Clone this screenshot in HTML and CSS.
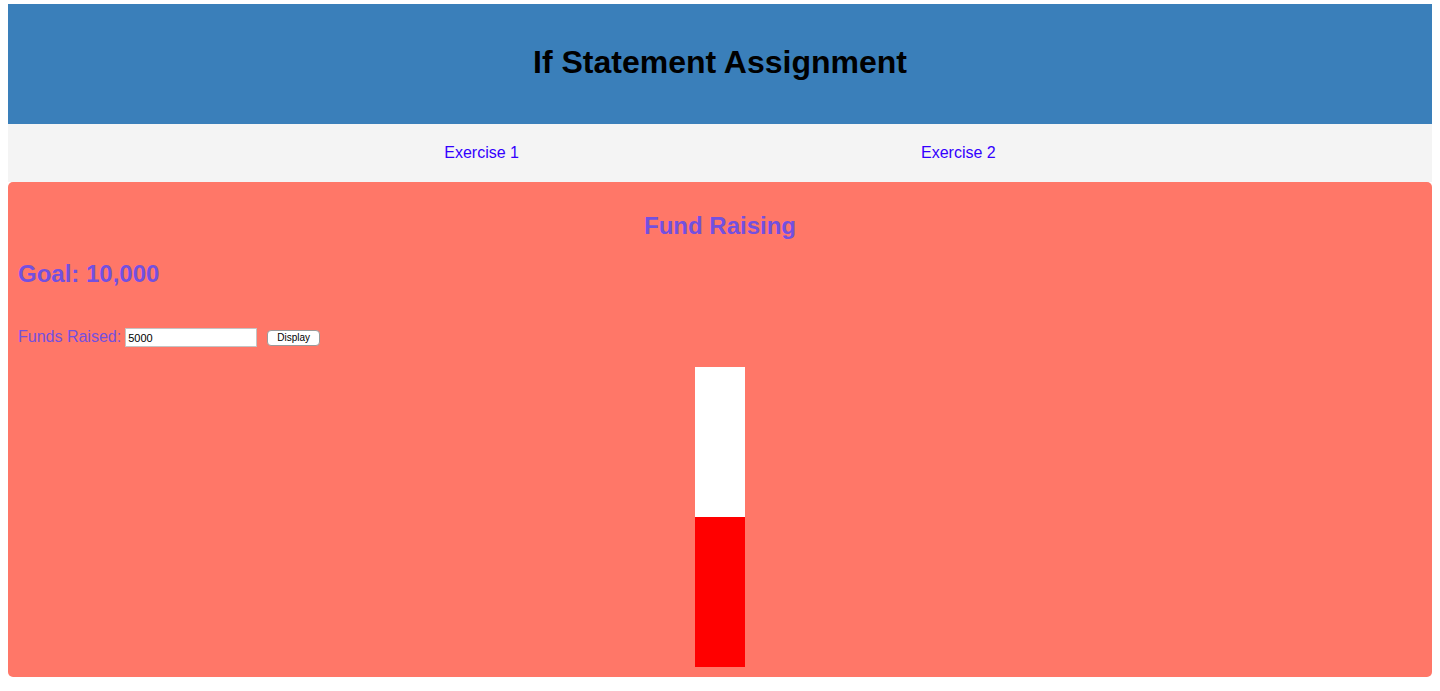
FILE: index.html
```html
<!DOCTYPE html>
<html lang="en">
<head>
<meta charset="utf-8">
<title>If Statement Assignment</title>
<link rel="stylesheet" href="styles.css">
</head>
<body>
<header class="site-header">
  <h1 class="site-title">If Statement Assignment</h1>
</header>
<nav class="site-nav">
  <a class="nav-link" href="#">Exercise 1</a>
  <a class="nav-link" href="#">Exercise 2</a>
</nav>
<main class="panel">
  <h2 class="panel-title">Fund Raising</h2>
  <h2 class="goal">Goal: 10,000</h2>
  <div class="form-row">
    <label class="form-label" for="funds">Funds Raised:</label>
    <input class="form-input" id="funds" type="text" value="5000">
    <button class="form-button" type="button">Display</button>
  </div>
  <div class="meter">
    <div class="meter-empty"></div>
    <div class="meter-fill" style="height: 150px"></div>
  </div>
</main>
</body>
</html>
```
FILE: styles.css
```css
html, body {
  margin: 0;
  padding: 0;
}
body {
  padding: 4px 8px 0 8px;
  font-family: "Liberation Sans", Arial, sans-serif;
  background: #ffffff;
}
.site-header {
  height: 120px;
  background: #3a7fba;
  display: flex;
  align-items: center;
  justify-content: center;
}
.site-title {
  margin: 0 0 4px 0;
  font-size: 32px;
  font-weight: bold;
  color: #000;
}
.site-nav {
  height: 58px;
  background: #f4f4f4;
  display: flex;
  align-items: center;
  justify-content: center;
  gap: 402px;
}
.nav-link {
  color: #3300ff;
  text-decoration: none;
  font-size: 16px;
}
.panel {
  background: #ff7768;
  border-radius: 5px;
  padding: 10px 10px 10px 10px;
  display: flex;
  flex-direction: column;
}
.panel-title {
  margin: 20px 0 0 0;
  font-size: 24px;
  line-height: 28px;
  text-align: center;
  color: #7350e0;
}
.goal {
  margin: 20px 0 0 0;
  font-size: 24px;
  line-height: 28px;
  color: #7350e0;
}
.form-row {
  margin-top: 39px;
  height: 21px;
  display: flex;
  align-items: center;
}
.form-label {
  font-size: 16px;
  line-height: 18px;
  margin-bottom: 2px;
  color: #7350e0;
  margin-right: 4px;
}
.form-input {
  box-sizing: border-box;
  width: 132px;
  height: 19px;
  margin: 0;
  padding: 1px 2px;
  border: 1px solid #c4c4c4;
  font-family: "Liberation Sans", Arial, sans-serif;
  font-size: 11px;
  color: #000;
  background: #fff;
}
.form-button {
  box-sizing: border-box;
  margin: 0 0 0 10px;
  width: 53px;
  height: 16px;
  padding: 0;
  border: 1px solid #9a9a9a;
  border-radius: 4px;
  background: #fff;
  font-family: "Liberation Sans", Arial, sans-serif;
  font-size: 10px;
  color: #000;
}
.meter {
  margin: 19px auto 0 auto;
  width: 50px;
  height: 300px;
  display: flex;
  flex-direction: column;
}
.meter-empty {
  flex: 1;
  background: #ffffff;
}
.meter-fill {
  background: #ff0000;
}
```
